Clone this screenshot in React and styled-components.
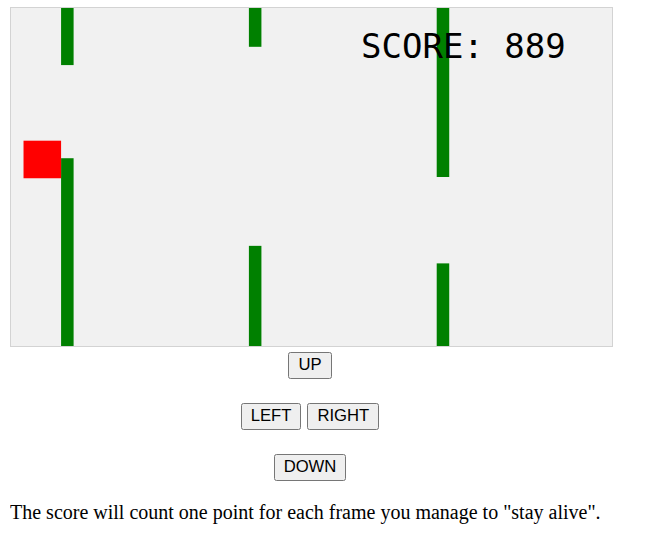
import React from "react";
import styled, { createGlobalStyle } from "styled-components";

const Global = createGlobalStyle`
  html, body { background: #ffffff; }
  body {
    margin: 7px 10px 0 10px;
    font-family: "Liberation Serif", "Times New Roman", serif;
    color: #000;
  }
`;

const Page = styled.div`
  display: flex;
  flex-direction: column;
  align-items: flex-start;
`;

const GameCanvas = styled.div`
  position: relative;
  width: 601px;
  height: 338px;
  border: 1px solid #d3d3d3;
  background: #f1f1f1;
  overflow: hidden;
`;

const Field = styled.svg`
  display: block;
  width: 100%;
  height: 100%;
`;

const Score = styled.div`
  position: absolute;
  left: 350px;
  top: 21px;
  font-family: "DejaVu Sans Mono", "Liberation Mono", monospace;
  font-size: 34px;
  line-height: 1;
  color: #000;
  white-space: pre;
`;

const Controls = styled.div`
  width: 600px;
  margin-top: 5px;
  display: flex;
  flex-direction: column;
  align-items: center;
  gap: 24px;
`;

const Row = styled.div`
  display: flex;
  gap: 6px;
`;

const Button = styled.button`
  height: 27px;
  padding: 0 9px;
  border: 1px solid #767676;
  border-radius: 2.5px;
  background: #efefef;
  color: #000;
  font-family: "Liberation Sans", Arial, sans-serif;
  font-size: 16.67px;
  line-height: 1;
  cursor: pointer;
`;

const Note = styled.p`
  margin: 20px 0 0 0;
  font-size: 20px;
  line-height: 23px;
`;

const obstacles = [
  { x: 40, top: 45.6, bottom: 120 },
  { x: 190, top: 31, bottom: 190 },
  { x: 340, top: 135, bottom: 204 },
];

export default function App() {
  return (
    <>
      <Global />
      <Page>
        <GameCanvas>
          <Field viewBox="0 0 480 270" preserveAspectRatio="none">
            {obstacles.map((o, i) => (
              <g key={i} fill="#008000">
                <rect x={o.x} y={0} width={10} height={o.top} />
                <rect x={o.x} y={o.bottom} width={10} height={270 - o.bottom} />
              </g>
            ))}
            <rect x={10} y={106} width={30} height={30} fill="#ff0000" />
          </Field>
          <Score>SCORE: 889</Score>
        </GameCanvas>
        <Controls>
          <Button>UP</Button>
          <Row>
            <Button>LEFT</Button>
            <Button>RIGHT</Button>
          </Row>
          <Button>DOWN</Button>
        </Controls>
        <Note>The score will count one point for each frame you manage to "stay alive".</Note>
      </Page>
    </>
  );
}
